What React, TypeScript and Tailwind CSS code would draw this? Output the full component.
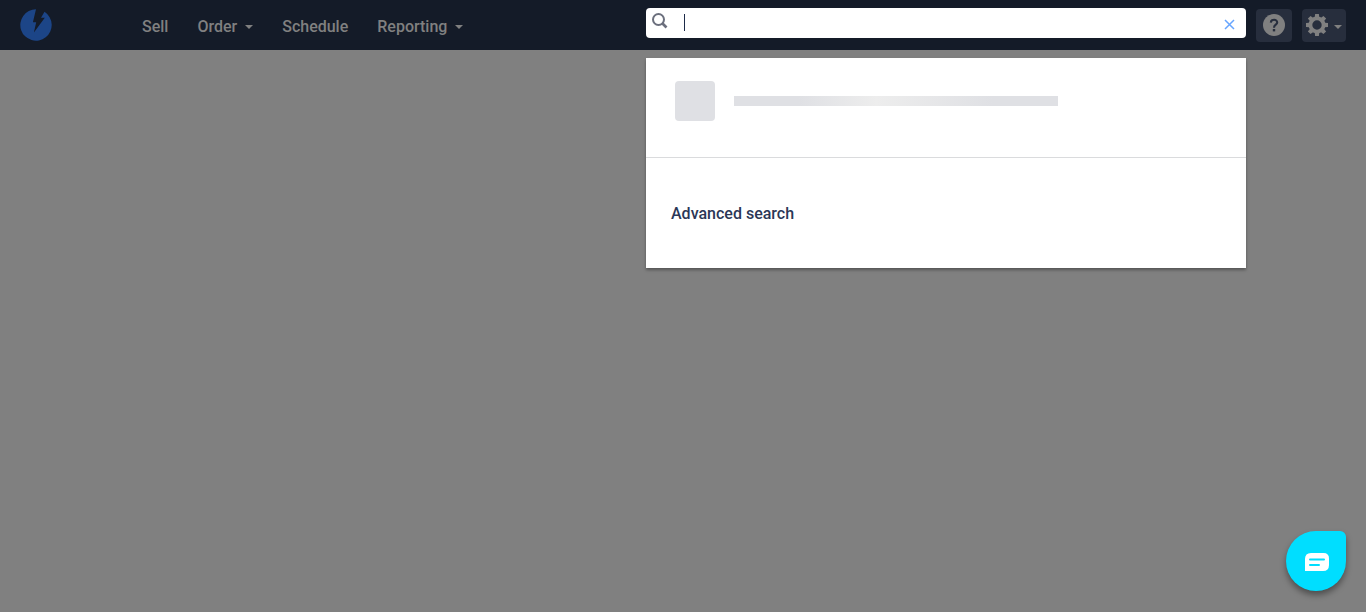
import React from "react";

function Caret({ className = "" }: { className?: string }) {
  return (
    <svg className={className} width="8" height="4" viewBox="0 0 8 4" fill="currentColor" aria-hidden="true">
      <path d="M0 0h8L4 4z" />
    </svg>
  );
}

function Logo() {
  return (
    <svg width="32" height="32" viewBox="0 0 32 32" aria-hidden="true">
      <path
        fill="#1c4587"
        d="M16 .300A15.700 15.700 0 1 0 24.500 2.800L21 8.700H24.800L13.900 23.600L16.200 13.200H12.900Z"
      />
    </svg>
  );
}

function SearchIcon() {
  return (
    <svg width="16" height="16" viewBox="0 0 16 16" fill="none" stroke="#6b6f7d" aria-hidden="true">
      <circle cx="6.500" cy="6.500" r="5.500" strokeWidth="2" />
      <path d="M10.500 10.500L14.500 14.500" strokeWidth="2.600" />
    </svg>
  );
}

function HelpIcon() {
  return (
    <svg width="22" height="22" viewBox="0 0 22 22" aria-hidden="true">
      <circle cx="11" cy="11" r="11" fill="#808080" />
      <path d="M7.800 8.600C8 4.800 14.300 4.900 14.200 8.500C14.200 10.700 11 10.700 11 13.700" fill="none" stroke="#272e3d" strokeWidth="2.100" />
      <rect x="9.800" y="15" width="2.400" height="2.400" fill="#272e3d" />
    </svg>
  );
}

const teeth = [0, 45, 90, 135, 180, 225, 270, 315];

function GearIcon() {
  return (
    <svg width="22" height="22" viewBox="-11 -11 22 22" fill="#808080" aria-hidden="true">
      <circle r="6.600" fill="none" stroke="#808080" strokeWidth="3.800" />
      {teeth.map((angle) => (
        <path key={angle} d="M-2.300 -7.500L-1.900 -11H1.900L2.300 -7.500Z" transform={`rotate(${angle})`} />
      ))}
    </svg>
  );
}

const links = [
  { label: "Sell", menu: false },
  { label: "Order", menu: true },
  { label: "Schedule", menu: false },
  { label: "Reporting", menu: true },
];

function Search() {
  return (
    <div className="relative mt-2 ml-auto w-full max-w-[600px]">
      <div className="relative flex h-[30px] items-center rounded bg-white pr-[11px] pl-[6px]">
        <label htmlFor="search" className="mb-1 shrink-0">
          <SearchIcon />
        </label>
        <input id="search" type="text" aria-label="Search" className="h-full min-w-0 flex-1 bg-transparent px-4 text-base text-[#242f4e] outline-none" />
        <span className="absolute top-[6px] left-[38px] h-[17px] w-px bg-[#1d2b49]" />
        <button type="button" aria-label="Clear search" className="mt-[3px] shrink-0">
          <svg width="11" height="11" viewBox="0 0 11 11" stroke="#67a5ff" strokeWidth="1.500" aria-hidden="true">
            <path d="M1 1L10 10M10 1L1 10" />
          </svg>
        </button>
      </div>
      <div className="absolute top-[50px] right-0 left-0 bg-white shadow-[0_2px_3px_rgba(0,0,0,0.35)]">
        <div className="flex items-center gap-[19px] border-b border-[#dadbdd] pt-[23px] pb-9 pl-[29px]">
          <div className="size-10 rounded bg-[#dfe0e4]" />
          <div className="h-[10px] w-[324px] bg-[linear-gradient(90deg,#dfe0e4_20%,#ededed_44%,#dfe0e4_80%)]" />
        </div>
        <div className="px-[25px] pt-11 pb-[42px]">
          <a href="#advanced" className="block text-base leading-6 font-medium text-[#2b3757]">Advanced search</a>
        </div>
      </div>
    </div>
  );
}

export default function App() {
  return (
    <div className="min-h-screen bg-[#808080] font-['Roboto',sans-serif]">
      <header className="flex h-[50px] items-start bg-[#141b28] px-5">
        <a href="#home" aria-label="Home" className="mt-[9px] shrink-0">
          <Logo />
        </a>
        <nav className="mt-[15px] mr-6 ml-[90px] flex shrink-0 gap-[29px] text-base leading-6 font-medium text-[#808080]">
          {links.map(({ label, menu }) =>
            menu ? (
              <button key={label} type="button" className="flex items-center gap-2">
                {label}
                <Caret />
              </button>
            ) : (
              <a key={label} href={`#${label.toLowerCase()}`}>{label}</a>
            ),
          )}
        </nav>
        <Search />
        <button type="button" aria-label="Help" className="mt-[9px] ml-[10px] flex h-[33px] w-9 shrink-0 items-center justify-center rounded bg-[#272e3d] pb-px">
          <HelpIcon />
        </button>
        <button type="button" aria-label="Settings" className="mt-[9px] ml-[10px] flex h-[33px] w-11 shrink-0 items-center justify-center gap-[6px] rounded bg-[#272e3d] pb-px text-[#808080]">
          <GearIcon />
          <Caret className="mt-1" />
        </button>
      </header>
      <button
        type="button"
        aria-label="Open chat"
        className="fixed right-5 bottom-[21px] flex size-[60px] items-center justify-center rounded-[30px] rounded-tr-md bg-[#00deff] shadow-[0_4px_6px_rgba(0,0,0,0.4)]"
      >
        <svg className="mt-[2px] ml-[2px]" width="24" height="18" viewBox="0 0 24 18" aria-hidden="true">
          <path d="M6 0H18.500Q24 0 24 5.500V12Q24 18 18 18H0V6Q0 0 6 0Z" fill="#fff" />
          <path d="M5 6.500H19M5 12H14" stroke="#00deff" strokeWidth="2" strokeLinecap="round" />
        </svg>
      </button>
    </div>
  );
}
